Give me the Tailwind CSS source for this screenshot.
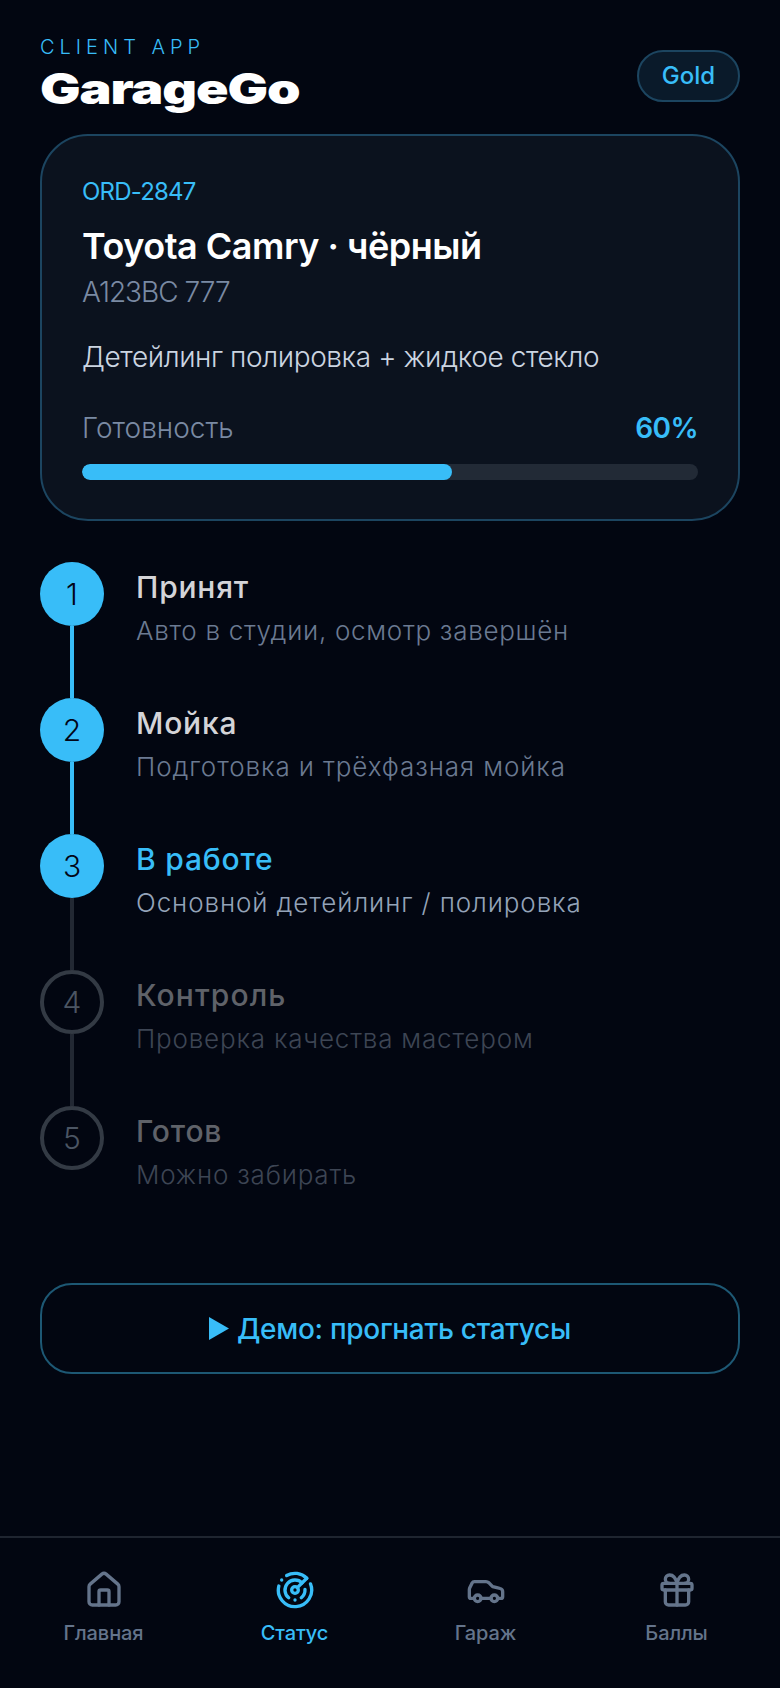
<!DOCTYPE html>
<html lang="ru">
<head>
  <meta charset="UTF-8">
  <meta name="viewport" content="width=device-width, initial-scale=1.0">
  <title>GarageGo - Статус</title>
  <script src="https://cdn.jsdelivr.net/npm/@tailwindcss/browser@4"></script>
</head>
<body class="bg-[#020611] font-['Inter','Noto_Sans',sans-serif] text-white">
  <div class="flex h-[1688px] w-[780px] flex-col overflow-hidden">

    <main class="flex flex-1 flex-col px-10 pt-[36px]">
      <!-- Header -->
      <header class="flex items-start justify-between">
        <div>
          <p class="text-[20px] leading-[22px] font-light tracking-[0.25em] text-[#38bdf8]">CLIENT APP</p>
          <h1 class="mt-[8px] origin-left scale-x-[1.28] text-[42px] leading-[46px] font-black tracking-[-0.02em]">GarageGo</h1>
        </div>
        <span class="mt-[14px] flex h-[52px] w-[103px] items-center justify-center rounded-full border-2 border-[#1c4560] bg-[#0a1a2a] text-[24px] font-medium text-[#38bdf8]">Gold</span>
      </header>

      <!-- Order card -->
      <section class="mt-[22px] h-[387px] rounded-[48px] border-2 border-[#1c4560] bg-[#0b121e] px-10 pt-[40px]">
        <p class="text-[24px] leading-[32px] tracking-[-0.8px] text-[#38bdf8]">ORD-2847</p>
        <h2 class="mt-[16px] text-[36px] leading-[44px] font-semibold tracking-[-0.5px]">Toyota Camry · чёрный</h2>
        <p class="mt-[4px] text-[28px] leading-[40px] font-light tracking-[-1px] text-[#7a8aa3]">A123BC 777</p>
        <p class="mt-[25px] text-[28px] leading-[40px] font-light tracking-[-0.4px] text-[#cbd5e1]">Детейлинг полировка + жидкое стекло</p>
        <div class="mt-[31px] flex items-center justify-between">
          <span class="text-[28px] leading-[40px] font-light text-[#7a8aa3]">Готовность</span>
          <span class="text-[28px] leading-[40px] font-semibold tracking-[-0.6px] text-[#38bdf8]">60%</span>
        </div>
        <div class="mt-[16px] h-4 overflow-hidden rounded-full bg-[#222a36]">
          <div class="h-full rounded-full bg-[#38bdf8]" style="width: 60%"></div>
        </div>
      </section>

      <!-- Steps -->
      <ol class="mt-[41px]">
        <li class="flex h-[136px] gap-8">
          <div class="flex w-16 flex-col items-center">
            <span class="flex size-16 shrink-0 items-center justify-center rounded-full bg-[#38bdf8] text-[30px] font-light text-[#020617]">1</span>
            <span class="w-1 flex-1 bg-[#38bdf8]"></span>
          </div>
          <div class="pt-[5px]">
            <p class="text-[30px] leading-[40px] font-medium tracking-[0.8px] text-[#d4d4d8]">Принят</p>
            <p class="mt-[4px] text-[26px] leading-[40px] font-light tracking-[0.7px] text-[#6b7a92]">Авто в студии, осмотр завершён</p>
          </div>
        </li>
        <li class="flex h-[136px] gap-8">
          <div class="flex w-16 flex-col items-center">
            <span class="flex size-16 shrink-0 items-center justify-center rounded-full bg-[#38bdf8] text-[30px] font-light text-[#020617]">2</span>
            <span class="w-1 flex-1 bg-[#38bdf8]"></span>
          </div>
          <div class="pt-[5px]">
            <p class="text-[30px] leading-[40px] font-medium tracking-[0.8px] text-[#d4d4d8]">Мойка</p>
            <p class="mt-[4px] text-[26px] leading-[40px] font-light tracking-[0.9px] text-[#6b7a92]">Подготовка и трёхфазная мойка</p>
          </div>
        </li>
        <li class="flex h-[136px] gap-8">
          <div class="flex w-16 flex-col items-center">
            <span class="flex size-16 shrink-0 items-center justify-center rounded-full bg-[#38bdf8] text-[30px] font-light text-[#020617]">3</span>
            <span class="w-1 flex-1 bg-[#222833]"></span>
          </div>
          <div class="pt-[5px]">
            <p class="text-[30px] leading-[40px] font-medium tracking-[0.8px] text-[#38bdf8]">В работе</p>
            <p class="mt-[4px] text-[26px] leading-[40px] font-light tracking-[0.9px] text-[#94a3b8]">Основной детейлинг / полировка</p>
          </div>
        </li>
        <li class="flex h-[136px] gap-8">
          <div class="flex w-16 flex-col items-center">
            <span class="flex size-16 shrink-0 items-center justify-center rounded-full border-4 border-[#333a44] text-[30px] font-light text-[#4b5563]">4</span>
            <span class="w-1 flex-1 bg-[#222833]"></span>
          </div>
          <div class="pt-[5px]">
            <p class="text-[30px] leading-[40px] font-medium tracking-[1.1px] text-[#5f6269]">Контроль</p>
            <p class="mt-[4px] text-[26px] leading-[40px] font-light tracking-[0.8px] text-[#3d4554]">Проверка качества мастером</p>
          </div>
        </li>
        <li class="flex h-[136px] gap-8">
          <div class="flex w-16 flex-col items-center">
            <span class="flex size-16 shrink-0 items-center justify-center rounded-full border-4 border-[#333a44] text-[30px] font-light text-[#4b5563]">5</span>
          </div>
          <div class="pt-[5px]">
            <p class="text-[30px] leading-[40px] font-medium tracking-[0.8px] text-[#5f6269]">Готов</p>
            <p class="mt-[4px] text-[26px] leading-[40px] font-light tracking-[0.8px] text-[#3d4554]">Можно забирать</p>
          </div>
        </li>
      </ol>

      <!-- Demo button -->
      <button class="mt-[41px] flex h-[91px] items-center justify-center gap-2 rounded-[32px] border-2 border-[#1d5874] text-[28px] font-medium tracking-[-0.3px] text-[#38bdf8]">
        <svg class="h-[23px] w-[20px]" viewBox="0 0 20 23" fill="currentColor"><path d="M0 0 20 11.5 0 23z"/></svg>
        <span>Демо: прогнать статусы</span>
      </button>
    </main>

    <!-- Bottom nav -->
    <nav class="grid h-[152px] grid-cols-4 border-t-2 border-[#1f2530] px-2 pt-[32px] text-[20px] font-medium tracking-[-0.1px] text-[#64748b]">
      <a class="flex flex-col items-center gap-2" href="#">
        <svg class="size-10" viewBox="0 0 24 24" fill="none" stroke="currentColor" stroke-width="2" stroke-linecap="round" stroke-linejoin="round"><path d="M15 21v-8a1 1 0 0 0-1-1h-4a1 1 0 0 0-1 1v8"/><path d="M3 10a2 2 0 0 1 .709-1.528l7-5.999a2 2 0 0 1 2.582 0l7 5.999A2 2 0 0 1 21 10v9a2 2 0 0 1-2 2H5a2 2 0 0 1-2-2z"/></svg>
        <span>Главная</span>
      </a>
      <a class="flex flex-col items-center gap-2 text-[#38bdf8]" href="#">
        <svg class="size-10" viewBox="0 0 24 24" fill="none" stroke="currentColor" stroke-width="2" stroke-linecap="round" stroke-linejoin="round"><path d="M19.07 4.93A10 10 0 0 0 6.99 3.34"/><path d="M4 6h.01"/><path d="M2.29 9.62A10 10 0 1 0 21.31 8.35"/><path d="M16.24 7.76A6 6 0 1 0 8.23 16.67"/><path d="M12 18h.01"/><path d="M17.99 11.66A6 6 0 0 1 15.77 16.67"/><circle cx="12" cy="12" r="2"/><path d="m13.41 10.59 5.66-5.66"/></svg>
        <span>Статус</span>
      </a>
      <a class="flex flex-col items-center gap-2" href="#">
        <svg class="size-10" viewBox="0 0 24 24" fill="none" stroke="currentColor" stroke-width="2" stroke-linecap="round" stroke-linejoin="round"><path d="M19 17h2c.6 0 1-.4 1-1v-3c0-.9-.7-1.7-1.5-1.9C18.7 10.6 16 10 16 10s-1.3-1.4-2.2-2.3c-.5-.4-1.1-.7-1.8-.7H5c-.6 0-1.1.4-1.4.9l-1.4 2.9A3.7 3.7 0 0 0 2 12v4c0 .6.4 1 1 1h2"/><circle cx="7" cy="17" r="2"/><path d="M9 17h6"/><circle cx="17" cy="17" r="2"/></svg>
        <span>Гараж</span>
      </a>
      <a class="flex flex-col items-center gap-2" href="#">
        <svg class="size-10" viewBox="0 0 24 24" fill="none" stroke="currentColor" stroke-width="2" stroke-linecap="round" stroke-linejoin="round"><rect x="3" y="8" width="18" height="4" rx="1"/><path d="M12 8v13"/><path d="M19 12v7a2 2 0 0 1-2 2H7a2 2 0 0 1-2-2v-7"/><path d="M7.5 8a2.5 2.5 0 0 1 0-5A4.8 8 0 0 1 12 8a4.8 8 0 0 1 4.5-5 2.5 2.5 0 0 1 0 5"/></svg>
        <span>Баллы</span>
      </a>
    </nav>
  </div>
</body>
</html>
